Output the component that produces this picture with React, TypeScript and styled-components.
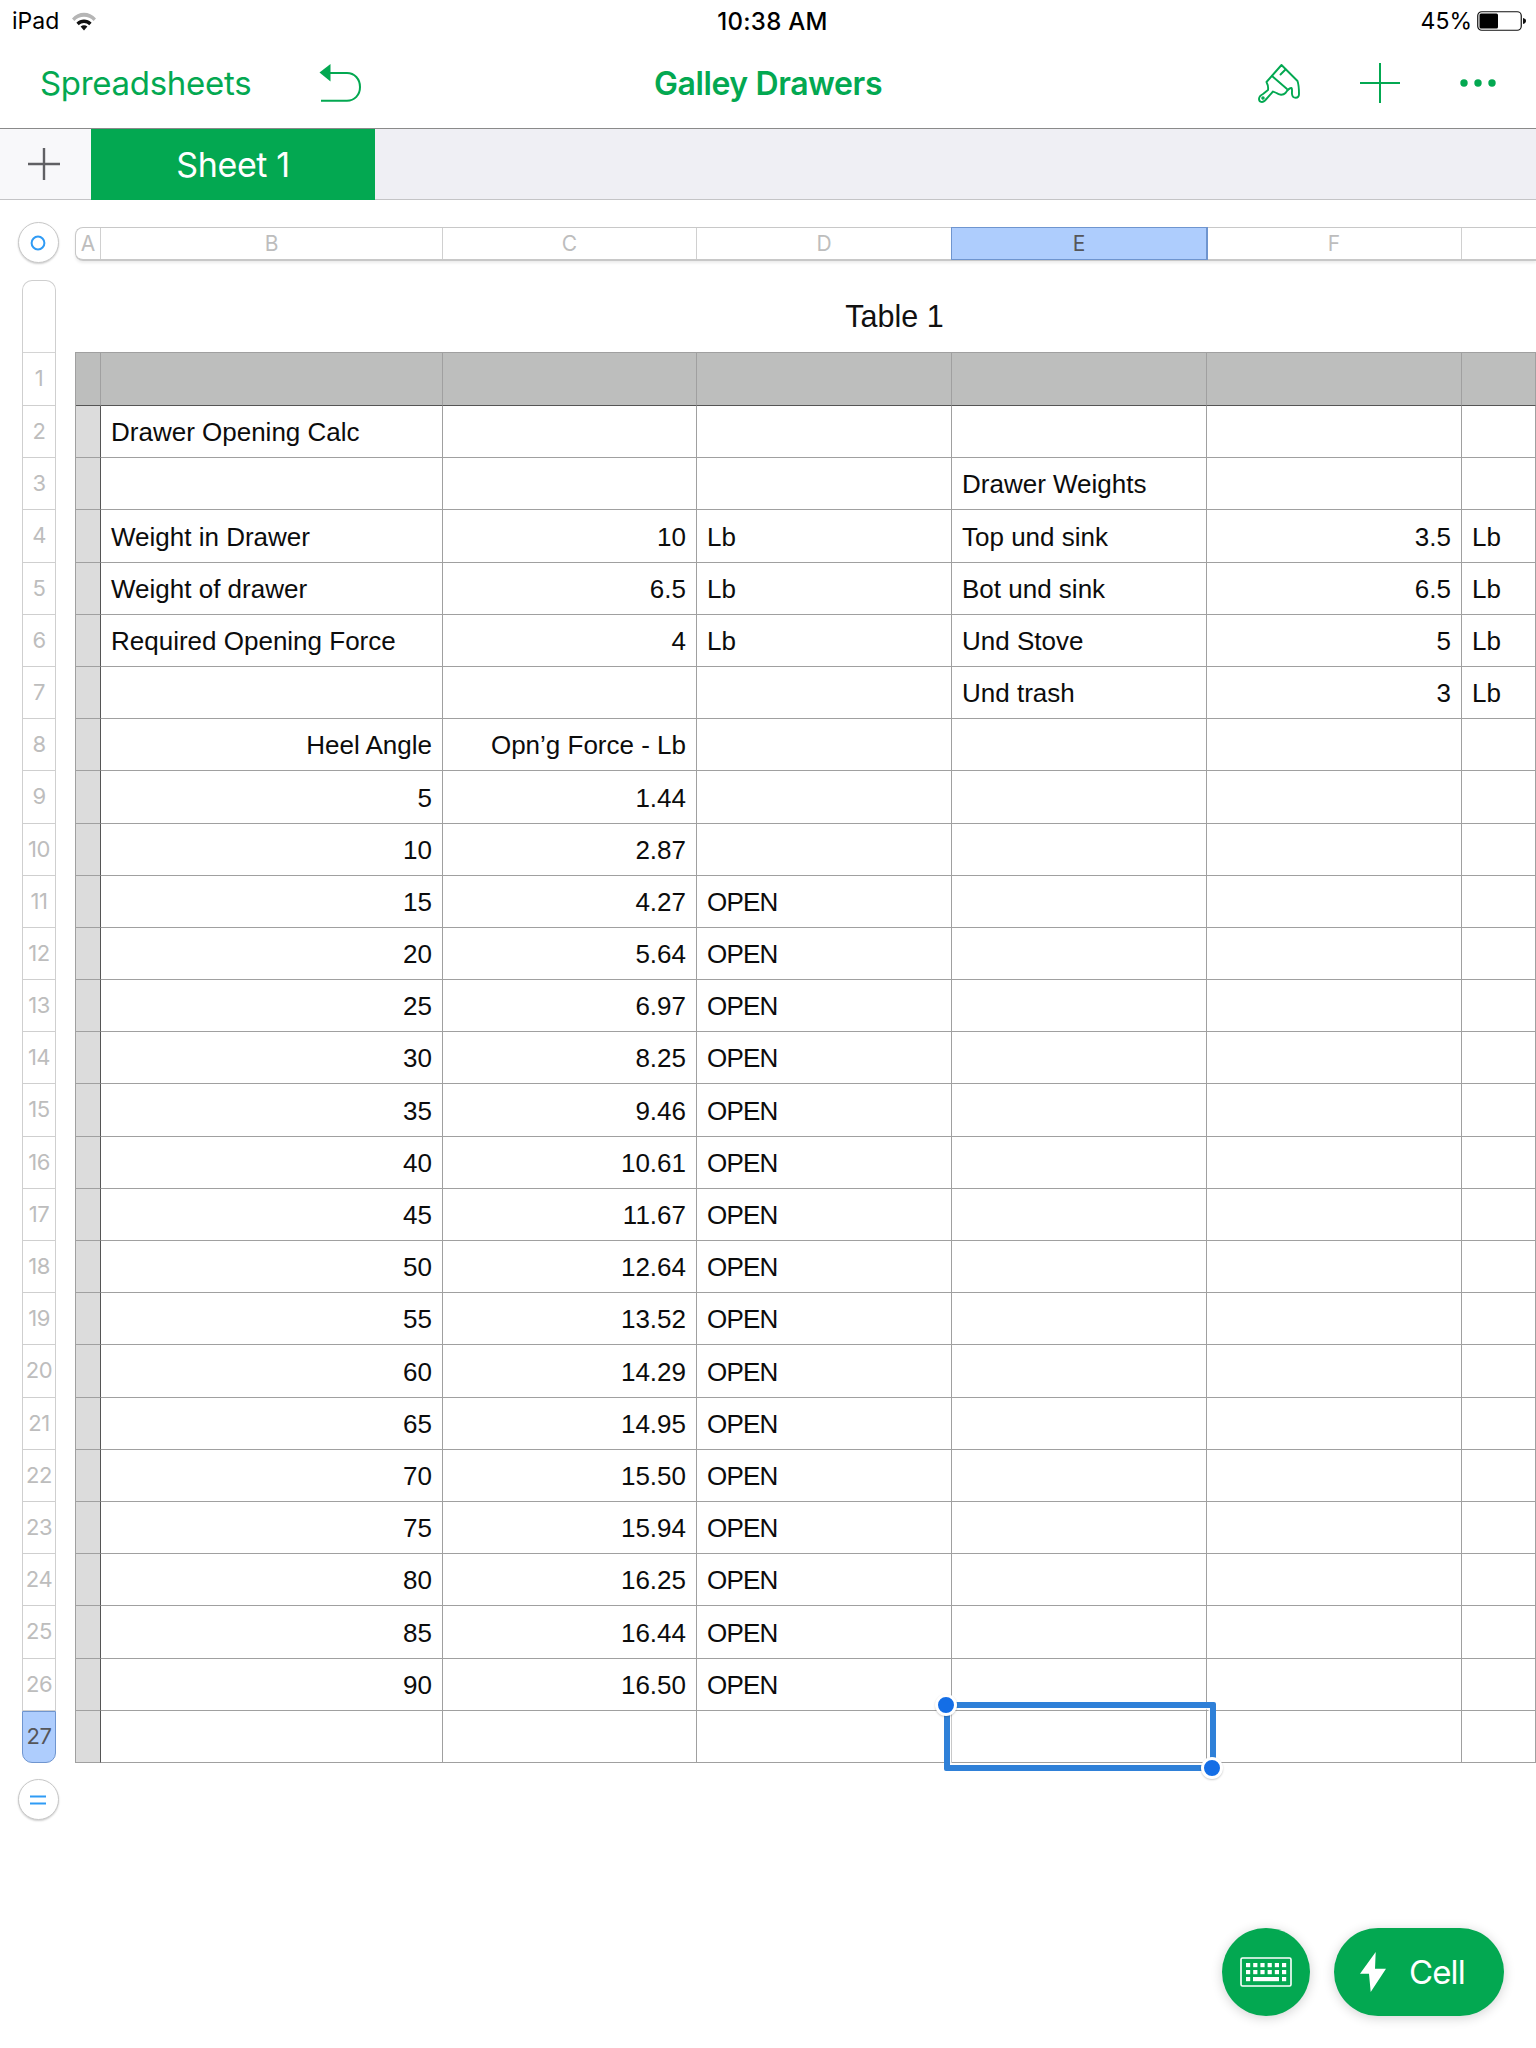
import React from "react";
import styled, { createGlobalStyle } from "styled-components";

const GREEN = "#03a851";
const UI = '"Inter", "Roboto", "Liberation Sans", sans-serif';
const CELL = '"Liberation Sans", Arial, sans-serif';
const COLUMNS = "25px 342px 254px 255px 255px 255px 74px";

const Global = createGlobalStyle`
  html, body { margin: 0; padding: 0; background: #fff; }
  #root { width: 1536px; height: 2048px; overflow: hidden; }
`;

const Page = styled.div`
  position: relative;
  width: 1536px;
  height: 2048px;
  display: flex;
  flex-direction: column;
  background: #fff;
  overflow: hidden;
`;

const StatusBar = styled.div`
  height: 42px;
  display: grid;
  grid-template-columns: 1fr auto 1fr;
  align-items: center;
  padding: 0 9px 0 12px;
  font: 400 23px ${UI};
  color: #000;
`;
const StatusLeft = styled.div`
  display: flex;
  align-items: center;
  gap: 13px;
`;
const StatusRight = styled.div`
  display: flex;
  align-items: center;
  justify-content: flex-end;
  gap: 5px;
`;
const Clock = styled.div`
  font-size: 24px;
  font-weight: 500;
  letter-spacing: 0.3px;
  margin-left: 6px;
`;

const NavBar = styled.div`
  height: 87px;
  box-sizing: border-box;
  display: grid;
  grid-template-columns: 1fr auto 1fr;
  align-items: center;
  padding-bottom: 4px;
  border-bottom: 1px solid #8a8a8a;
  color: ${GREEN};
`;
const NavLeft = styled.div`
  display: flex;
  align-items: center;
  gap: 68px;
  padding-left: 40px;
`;
const NavLink = styled.div`
  font: 400 33px ${UI};
  letter-spacing: -0.3px;
`;
const NavTitle = styled.div`
  font: 600 32px ${UI};
  letter-spacing: -0.4px;
`;
const NavRight = styled.div`
  display: flex;
  align-items: center;
  justify-content: flex-end;
  gap: 60px;
  padding-right: 40px;
`;

const TabBar = styled.div`
  height: 71px;
  box-sizing: border-box;
  display: flex;
  background: #efeff4;
  border-bottom: 1px solid #c4c4c6;
`;
const AddSheet = styled.div`
  width: 91px;
  box-sizing: border-box;
  padding-right: 3px;
  background: #f8f8fa;
  display: flex;
  align-items: center;
  justify-content: center;
`;
const Tab = styled.div`
  width: 284px;
  background: ${GREEN};
  color: #fff;
  display: flex;
  align-items: center;
  justify-content: center;
  font: 400 34px ${UI};
  letter-spacing: -0.4px;
  margin-bottom: -1px;
`;

const Sheet = styled.div`
  display: grid;
  grid-template-columns: 75px 1fr;
  padding-top: 22px;
  flex: 1;
  min-height: 0;
`;
const Side = styled.div`
  display: flex;
  flex-direction: column;
  align-items: center;
  width: 75px;
`;
const RoundButton = styled.div<{ $top?: number }>`
  width: 41px;
  height: 41px;
  box-sizing: border-box;
  margin: ${(p) => p.$top ?? 0}px 0 0 1px;
  border-radius: 50%;
  background: #fff;
  border: 1px solid #c8c8c8;
  box-shadow: 0 1px 2px rgba(0, 0, 0, 0.2);
  display: flex;
  align-items: center;
  justify-content: center;
  flex: none;
`;
const RowRail = styled.div`
  width: 34px;
  margin: 17px 0 0 3px;
  display: flex;
  flex-direction: column;
  box-sizing: border-box;
`;
const RailCap = styled.div`
  height: 73px;
  box-sizing: border-box;
  border: 1.5px solid #cfcfcf;
  border-bottom: 1px solid #d4d4d4;
  border-radius: 10px 10px 0 0;
`;
const RailCell = styled.div<{ $h: number; $active?: boolean }>`
  height: ${(p) => p.$h}px;
  box-sizing: border-box;
  padding-bottom: 2px;
  display: flex;
  align-items: center;
  justify-content: center;
  font: 400 22px ${UI};
  letter-spacing: -0.5px;
  color: ${(p) => (p.$active ? "#55565a" : "#bdbdbd")};
  background: ${(p) => (p.$active ? "#aecdfd" : "#fff")};
  border: 1.5px solid ${(p) => (p.$active ? "#6f95cf" : "#cfcfcf")};
  border-width: ${(p) => (p.$active ? "1px 1px 1.5px 1px" : "0 1.5px 1px 1.5px")};
  border-radius: ${(p) => (p.$active ? "0 0 10px 10px" : "0")};
`;

const Main = styled.div`
  display: flex;
  flex-direction: column;
  min-width: 0;
  padding-top: 5px;
`;
const ColHeader = styled.div`
  height: 34px;
  display: grid;
  grid-template-columns: ${COLUMNS};
  box-sizing: border-box;
  border: 1px solid #c8c8c8;
  border-bottom-width: 2px;
  border-right: 0;
  border-radius: 8px 0 0 8px;
  box-shadow: 0 2px 3px rgba(0, 0, 0, 0.08);
`;
const ColCell = styled.div<{ $active?: boolean }>`
  display: flex;
  align-items: center;
  justify-content: center;
  font: 400 21px ${UI};
  color: ${(p) => (p.$active ? "#55565a" : "#bdbdbd")};
  background: ${(p) => (p.$active ? "#aecdfd" : "transparent")};
  border-right: 1px solid ${(p) => (p.$active ? "#6f95cf" : "#d0d0d0")};
  outline: ${(p) => (p.$active ? "1px solid #6f95cf" : "none")};
  &:last-child { border-right: 0; }
`;
const TableTitle = styled.div`
  height: 91px;
  padding: 20px 0 0 178px;
  box-sizing: border-box;
  display: flex;
  align-items: center;
  justify-content: center;
  font: 400 30.5px ${CELL};
  color: #111;
`;
const Table = styled.div`
  position: relative;
  display: grid;
  grid-template-columns: ${COLUMNS};
  border-top: 1px solid #a0a0a0;
  border-left: 1px solid #a0a0a0;
  box-sizing: border-box;
`;
const Cell = styled.div<{ $h: number; $right?: boolean; $kind?: "head" | "gutter" | "body"; $firstBody?: boolean }>`
  height: ${(p) => p.$h}px;
  box-sizing: border-box;
  display: flex;
  align-items: center;
  justify-content: ${(p) => (p.$right ? "flex-end" : "flex-start")};
  padding: 2px 10px 0;
  font: 400 26px ${CELL};
  color: #0c0c0c;
  white-space: nowrap;
  background: ${(p) => (p.$kind === "head" ? "#bdbebd" : p.$kind === "gutter" ? "#dcdcdc" : "#fff")};
  border-right: 1px solid ${(p) => (p.$kind === "gutter" ? "#555" : "#a0a0a0")};
  border-bottom: 1px solid ${(p) => (p.$firstBody ? "#555" : "#a0a0a0")};
`;
const Caps = styled.span`
  letter-spacing: -0.8px;
`;

const Selection = styled.div`
  position: absolute;
  left: 867.5px;
  top: 1349px;
  width: 272px;
  height: 69px;
  box-sizing: border-box;
  border: 6px solid #2f80d8;
  border-radius: 2px;
  box-shadow: inset 0 0 0 1.5px rgba(255, 255, 255, 0.85);
  pointer-events: none;
`;
const Handle = styled.div<{ $x: number; $y: number }>`
  position: absolute;
  left: ${(p) => p.$x}px;
  top: ${(p) => p.$y}px;
  width: 16px;
  height: 16px;
  border-radius: 50%;
  background: #146ee6;
  border: 3px solid #fff;
  box-shadow: 0 1px 2px rgba(0, 0, 0, 0.2);
`;

const Floating = styled.div`
  position: absolute;
  right: 32px;
  top: 1928px;
  display: flex;
  gap: 24px;
`;
const Fab = styled.div`
  height: 88px;
  min-width: 88px;
  border-radius: 44px;
  background: ${GREEN};
  color: #fff;
  display: flex;
  align-items: center;
  justify-content: center;
  box-shadow: 0 2px 12px rgba(0, 0, 0, 0.18);
`;
const CellFab = styled(Fab)`
  width: 170px;
  box-sizing: border-box;
  justify-content: flex-start;
  padding-left: 26px;
  gap: 23px;
  font: 400 33px ${UI};
  letter-spacing: -0.9px;
`;

const Wifi = () => (
  <svg width="24" height="19" viewBox="0 0 24 19">
    <path d="M0 6.5C6.5 -1.2 17.5 -1.2 24 6.5L21.6 9C16.5 3.4 7.5 3.4 2.4 9Z" fill="#b5b5b5" />
    <path d="M4.4 10.8C8.8 6.4 15.2 6.4 19.6 10.8L17.2 13.2C14 10.4 10 10.4 6.8 13.2Z" fill="#111" />
    <path d="M8.6 14.6C10.6 12.9 13.4 12.9 15.4 14.6L12 18.6Z" fill="#111" />
  </svg>
);

const Battery = () => (
  <svg width="50" height="20" viewBox="0 0 50 20">
    <rect x="0.75" y="0.75" width="43.5" height="18.5" rx="4" fill="none" stroke="#111" strokeWidth="1.2" />
    <rect x="2.5" y="2.5" width="18.5" height="15" rx="1.5" fill="#000" />
    <path d="M46 7C48 7.5 49 8.5 49 10C49 11.5 48 12.5 46 13Z" fill="#111" />
  </svg>
);

const Undo = () => (
  <svg width="42" height="38" viewBox="0 0 42 38" fill="none">
    <path d="M0.5 8.5L11.5 0V17.5Z" fill={GREEN} />
    <path d="M10 9H28C35.5 9 41 15 41 23C41 31 35.5 36.7 28 36.7H2" stroke={GREEN} strokeWidth="2" />
  </svg>
);

const Brush = () => (
  <svg width="42" height="39" viewBox="0 0 42 39" fill="none" stroke={GREEN} strokeWidth="1.9" strokeLinejoin="round" strokeLinecap="round">
    <path d="M23.5 1L39.5 17C40.5 20 41 25 41 30C41 35 34.5 35 34 30C33.8 27 34.5 25 33.5 24C31 24 29.5 26 27.5 29C25 31.5 21 31 18.5 29L15 27.5L7 36.5C4.5 39 1 38 1 35C1 32 3 31 5 30L10 26C10.5 23 9.5 20 8.5 18Z" />
    <path d="M14 12L29 25" />
    <path d="M22.5 10.5L27.5 5.5" />
    <circle cx="5" cy="34" r="0.8" />
  </svg>
);

const Plus = ({ size, color, w }: { size: number; color: string; w: number }) => (
  <svg width={size} height={size} viewBox={`0 0 ${size} ${size}`}>
    <path d={`M${size / 2} 0V${size}M0 ${size / 2}H${size}`} stroke={color} strokeWidth={w} />
  </svg>
);

const Dots = () => (
  <svg width="36" height="10" viewBox="0 0 36 10" fill={GREEN}>
    <circle cx="4" cy="5" r="3.7" />
    <circle cx="18" cy="5" r="3.7" />
    <circle cx="32" cy="5" r="3.7" />
  </svg>
);

const Ring = () => (
  <svg width="16" height="16" viewBox="0 0 16 16">
    <circle cx="8" cy="8" r="6.4" fill="none" stroke="#2f9bf5" strokeWidth="2" />
  </svg>
);

const Equals = () => (
  <svg width="18" height="10" viewBox="0 0 18 10">
    <path d="M1 1.5H17M1 8.5H17" stroke="#2f9bf5" strokeWidth="2" />
  </svg>
);

const Keyboard = () => (
  <svg width="52" height="30" viewBox="0 0 52 30" fill="#fff">
    <rect x="1" y="1" width="50" height="28" rx="1.5" fill="none" stroke="#fff" strokeWidth="1.6" />
    {[0, 1].map((r) =>
      [0, 1, 2, 3, 4, 5].map((c) => (
        <rect key={`${r}-${c}`} x={6 + c * 7.2} y={6 + r * 7} width="4.2" height="4.2" />
      ))
    )}
    <rect x="6" y="20" width="4.2" height="4.2" />
    <rect x="13" y="20" width="26" height="4.2" />
    <rect x="42" y="20" width="4.2" height="4.2" />
  </svg>
);

const Bolt = () => (
  <svg width="26" height="40" viewBox="0 0 26 40" fill="#fff">
    <path d="M15.7 0L0 21.7H9L10.7 40L26 16.7H15Z" />
  </svg>
);

type Row = [string?, string?, string?, string?, string?, string?];

const data: Row[] = [
  [],
  ["Drawer Opening Calc"],
  ["", "", "", "Drawer Weights"],
  ["Weight in Drawer", "10", "Lb", "Top und sink", "3.5", "Lb"],
  ["Weight of drawer", "6.5", "Lb", "Bot und sink", "6.5", "Lb"],
  ["Required Opening Force", "4", "Lb", "Und Stove", "5", "Lb"],
  ["", "", "", "Und trash", "3", "Lb"],
  ["Heel Angle", "Opn\u2019g Force - Lb"],
  ["5", "1.44"],
  ["10", "2.87"],
  ["15", "4.27", "OPEN"],
  ["20", "5.64", "OPEN"],
  ["25", "6.97", "OPEN"],
  ["30", "8.25", "OPEN"],
  ["35", "9.46", "OPEN"],
  ["40", "10.61", "OPEN"],
  ["45", "11.67", "OPEN"],
  ["50", "12.64", "OPEN"],
  ["55", "13.52", "OPEN"],
  ["60", "14.29", "OPEN"],
  ["65", "14.95", "OPEN"],
  ["70", "15.50", "OPEN"],
  ["75", "15.94", "OPEN"],
  ["80", "16.25", "OPEN"],
  ["85", "16.44", "OPEN"],
  ["90", "16.50", "OPEN"],
  [],
];

// Row edges in the picture fall on a 52.19px pitch, rounded to whole pixels.
const edge = (i: number) => Math.round(406 + 52.19 * (i - 1));
const rowHeight = (i: number) => (i === 0 ? 53 : edge(i + 1) - edge(i));

const isRightAligned = (rowIndex: number, col: number) => {
  if (col === 1 || col === 4) return true;
  if (col === 0) return rowIndex >= 7;
  return false;
};

export default function App() {
  return (
    <Page>
      <Global />
      <StatusBar>
        <StatusLeft>
          <span>iPad</span>
          <Wifi />
        </StatusLeft>
        <Clock>10:38 AM</Clock>
        <StatusRight>
          <span>45%</span>
          <Battery />
        </StatusRight>
      </StatusBar>

      <NavBar>
        <NavLeft>
          <NavLink>Spreadsheets</NavLink>
          <Undo />
        </NavLeft>
        <NavTitle>Galley Drawers</NavTitle>
        <NavRight>
          <Brush />
          <Plus size={40} color={GREEN} w={2} />
          <Dots />
        </NavRight>
      </NavBar>

      <TabBar>
        <AddSheet>
          <Plus size={32} color="#606064" w={2.4} />
        </AddSheet>
        <Tab>Sheet 1</Tab>
      </TabBar>

      <Sheet>
        <Side>
          <RoundButton>
            <Ring />
          </RoundButton>
          <RowRail>
            <RailCap />
            {data.map((_, i) => (
              <RailCell key={i} $h={rowHeight(i)} $active={i === 26}>
                {i + 1}
              </RailCell>
            ))}
          </RowRail>
          <RoundButton $top={16}>
            <Equals />
          </RoundButton>
        </Side>
        <Main>
          <ColHeader>
            <ColCell>A</ColCell>
            <ColCell>B</ColCell>
            <ColCell>C</ColCell>
            <ColCell>D</ColCell>
            <ColCell $active>E</ColCell>
            <ColCell>F</ColCell>
            <ColCell />
          </ColHeader>
          <TableTitle>Table 1</TableTitle>
          <Table>
            {data.map((row, r) => (
              <React.Fragment key={r}>
                <Cell $h={rowHeight(r)} $kind={r === 0 ? "head" : "gutter"} $firstBody={r === 0} />
                {[0, 1, 2, 3, 4, 5].map((c) => (
                  <Cell
                    key={c}
                    $h={rowHeight(r)}
                    $right={isRightAligned(r, c)}
                    $kind={r === 0 ? "head" : "body"}
                    $firstBody={r === 0}
                  >
                    {row[c] === "OPEN" ? <Caps>OPEN</Caps> : row[c]}
                  </Cell>
                ))}
              </React.Fragment>
            ))}
            <Selection />
          </Table>
        </Main>
      </Sheet>

      <Handle $x={935} $y={1694} />
      <Handle $x={1201} $y={1757} />

      <Floating>
        <Fab>
          <Keyboard />
        </Fab>
        <CellFab>
          <Bolt />
          <span>Cell</span>
        </CellFab>
      </Floating>
    </Page>
  );
}
